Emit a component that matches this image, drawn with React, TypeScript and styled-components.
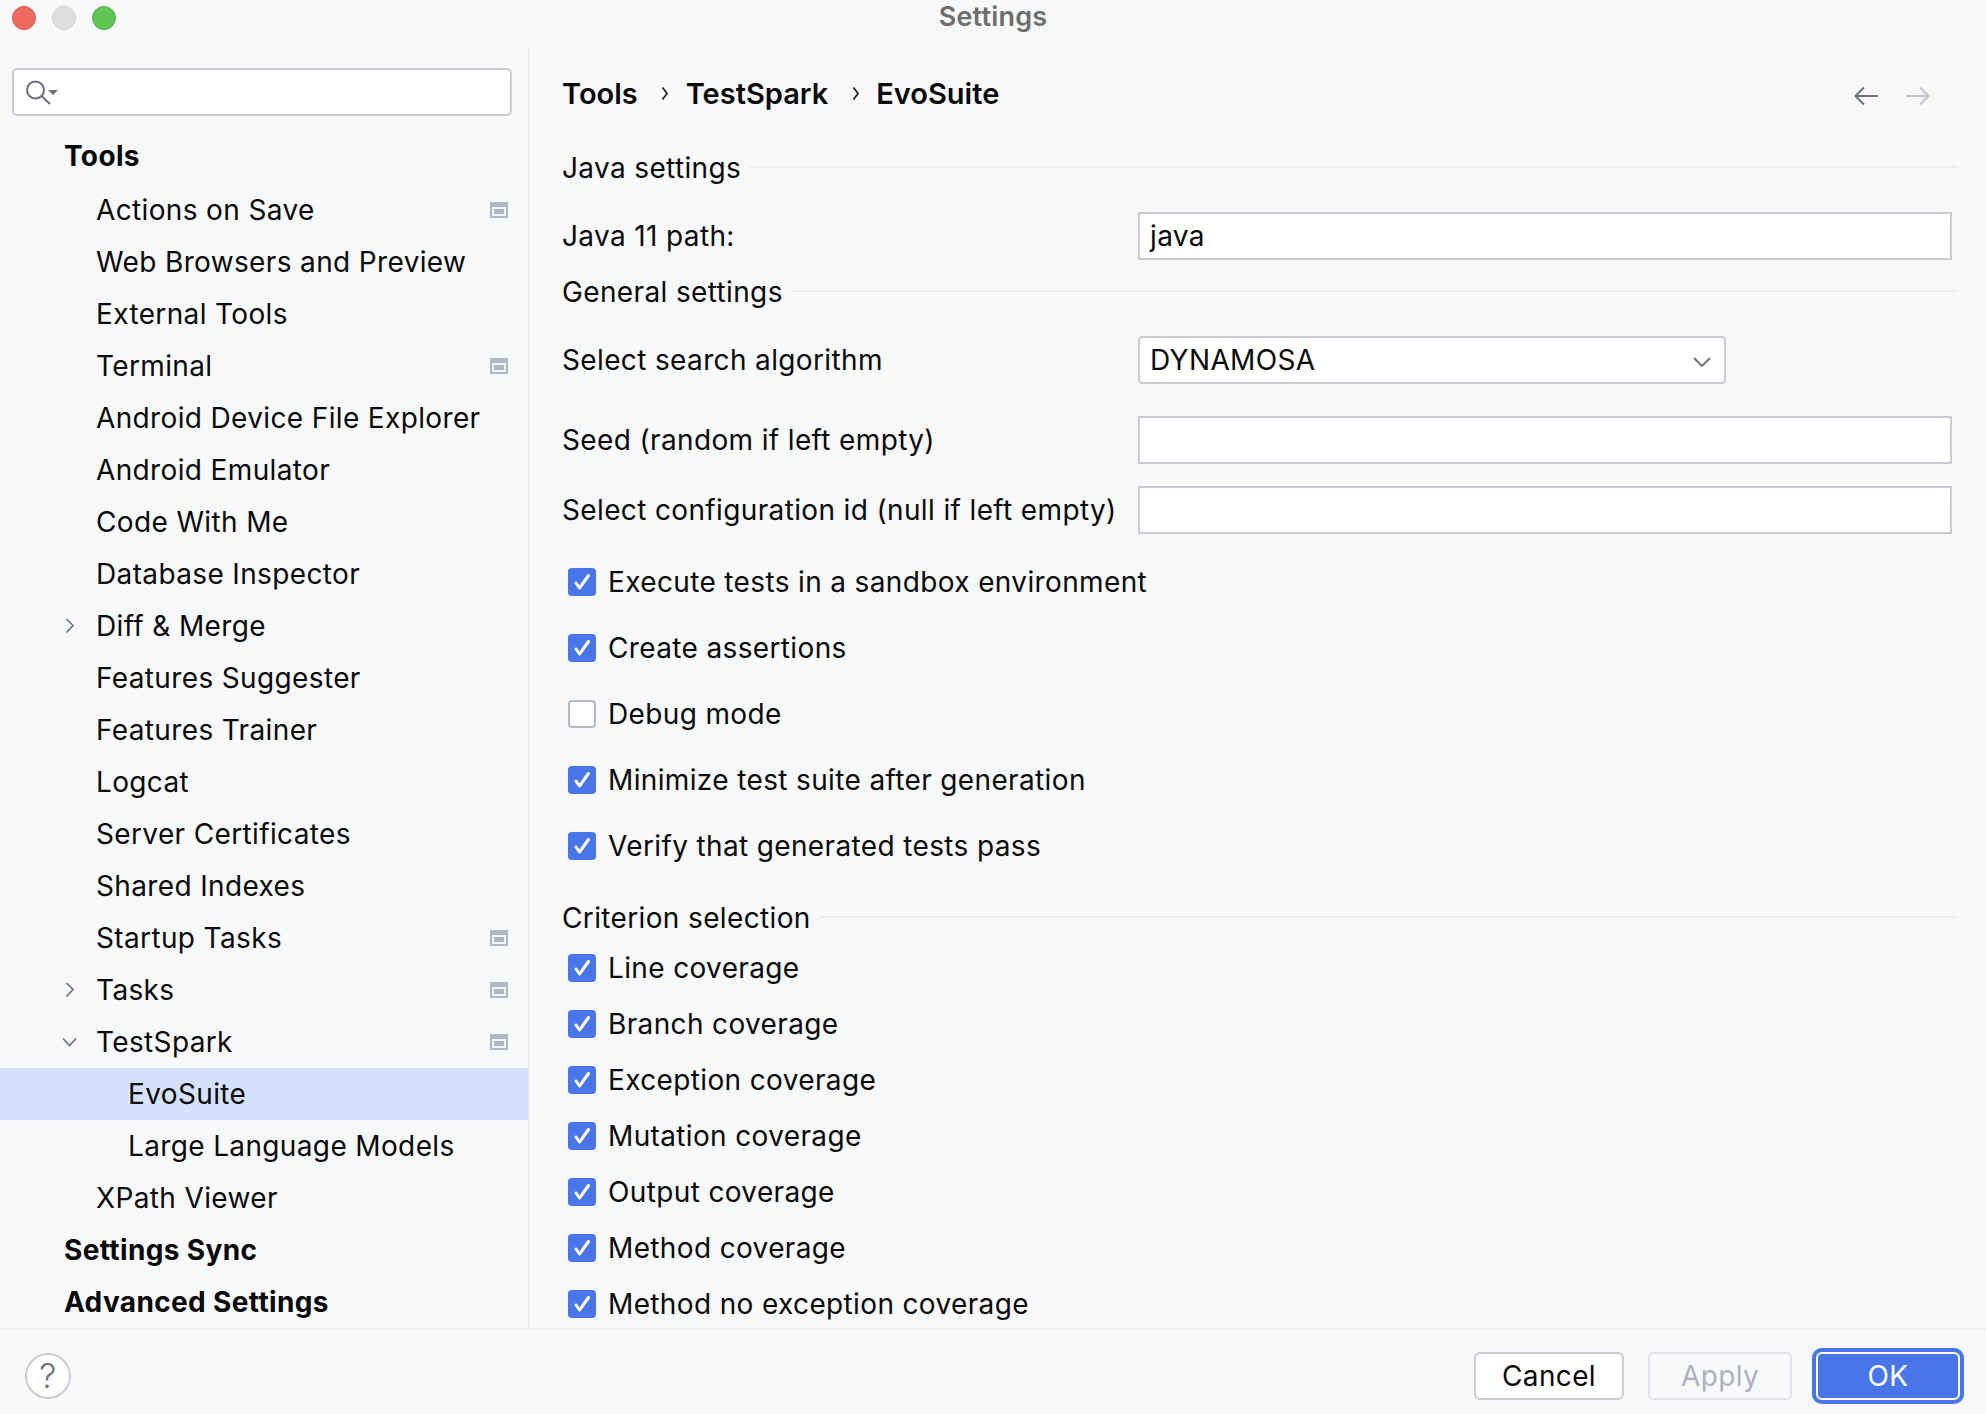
import React from "react";
import styled, { createGlobalStyle } from "styled-components";

const GlobalStyle = createGlobalStyle`
  html, body {
    margin: 0;
    padding: 0;
    background: #f7f8fa;
  }
  body {
    font-family: Inter, "Liberation Sans", sans-serif;
    font-size: 28px;
    font-optical-sizing: none;
    letter-spacing: 0.36px;
    color: #0a0a0a;
    overflow: hidden;
  }
`;

const treeItems = [
  { label: "Tools", level: 0, bold: true },
  { label: "Actions on Save", level: 1, badge: true },
  { label: "Web Browsers and Preview", level: 1 },
  { label: "External Tools", level: 1 },
  { label: "Terminal", level: 1, badge: true },
  { label: "Android Device File Explorer", level: 1 },
  { label: "Android Emulator", level: 1 },
  { label: "Code With Me", level: 1 },
  { label: "Database Inspector", level: 1 },
  { label: "Diff & Merge", level: 1, arrow: "right" },
  { label: "Features Suggester", level: 1 },
  { label: "Features Trainer", level: 1 },
  { label: "Logcat", level: 1 },
  { label: "Server Certificates", level: 1 },
  { label: "Shared Indexes", level: 1 },
  { label: "Startup Tasks", level: 1, badge: true },
  { label: "Tasks", level: 1, arrow: "right", badge: true },
  { label: "TestSpark", level: 1, arrow: "down", badge: true },
  { label: "EvoSuite", level: 2, selected: true },
  { label: "Large Language Models", level: 2 },
  { label: "XPath Viewer", level: 1 },
  { label: "Settings Sync", level: 0, bold: true },
  { label: "Advanced Settings", level: 0, bold: true },
];

const generalChecks = [
  { label: "Execute tests in a sandbox environment", checked: true },
  { label: "Create assertions", checked: true },
  { label: "Debug mode", checked: false },
  { label: "Minimize test suite after generation", checked: true },
  { label: "Verify that generated tests pass", checked: true },
];

const criteria = [
  "Line coverage",
  "Branch coverage",
  "Exception coverage",
  "Mutation coverage",
  "Output coverage",
  "Method coverage",
  "Method no exception coverage",
];

const CheckBox = ({ checked }: { checked: boolean }) => (
  <Box $checked={checked}>
    {checked && (
      <svg width="28" height="28" viewBox="0 0 28 28" fill="none">
        <path d="M8 15l3.5 5L20.5 7.5" stroke="#fff" strokeWidth="3" strokeLinecap="round" strokeLinejoin="round" />
      </svg>
    )}
  </Box>
);

const Chevron = ({ dir }: { dir: string }) => (
  <ArrowSlot>
    <svg width="20" height="20" viewBox="0 0 20 20" fill="none">
      <path
        d={dir === "down" ? "M3 6.5l6.5 7 6.5-7" : "M6.5 3l6.5 6.5-6.5 7"}
        stroke="#6c707e"
        strokeWidth="1.7"
      />
    </svg>
  </ArrowSlot>
);

const ProjectBadge = () => (
  <BadgeSlot>
    <svg width="18" height="16" viewBox="0 0 18 16">
      <rect width="18" height="16" fill="#aeb7c2" />
      <rect x="2" y="5" width="14" height="9" fill="#f2f4f7" />
      <rect x="4" y="7" width="10" height="5" fill="#aeb7c2" />
    </svg>
  </BadgeSlot>
);

const CrumbArrow = () => (
  <CrumbSep>
    <svg width="8" height="15" viewBox="0 0 8 15" fill="none">
      <path d="M1.5 1.5L6 7.5l-4.500 6" stroke="#1a1a1a" strokeWidth="1.7" />
    </svg>
  </CrumbSep>
);

export default function App() {
  return (
    <>
      <GlobalStyle />
      <Window>
        <TitleBar>
          <Lights>
            <Light $color="#ee6a5f" $edge="#d9574d" />
            <Light $color="#e0e0e0" $edge="#c9c9c9" />
            <Light $color="#61c554" $edge="#50ae44" />
          </Lights>
          <Title>Settings</Title>
        </TitleBar>

        <Body>
          <Sidebar>
            <SearchBox>
              <svg width="34" height="28" viewBox="0 0 34 28" fill="none">
                <circle cx="10.5" cy="12" r="8.5" stroke="#6c707e" strokeWidth="2" />
                <path d="M16.5 18l8.5 8" stroke="#6c707e" strokeWidth="2" />
                <path d="M23 12h10l-5 5z" fill="#6c707e" />
              </svg>
            </SearchBox>
            <Tree>
              {treeItems.map((item) => (
                <TreeRow key={item.label} $level={item.level} $bold={item.bold} $selected={item.selected}>
                  {item.arrow && <Chevron dir={item.arrow} />}
                  {item.label}
                  {item.badge && <ProjectBadge />}
                </TreeRow>
              ))}
            </Tree>
          </Sidebar>

          <Content>
            <Header>
              <Crumb>Tools</Crumb>
              <CrumbArrow />
              <Crumb>TestSpark</Crumb>
              <CrumbArrow />
              <Crumb>EvoSuite</Crumb>
              <NavArrows>
                <svg width="24" height="20" viewBox="0 0 24 20" fill="none">
                  <path d="M24 10H2M10 1.5L1.5 10l8.5 8.5" stroke="#6c707e" strokeWidth="2" />
                </svg>
                <svg width="24" height="20" viewBox="0 0 24 20" fill="none">
                  <path d="M0 10h22M14 1.5l8.5 8.5-8.5 8.5" stroke="#c0c2c8" strokeWidth="2" />
                </svg>
              </NavArrows>
            </Header>

            <Section $height={56}>Java settings</Section>
            <FormRow $top={16}>
              <FieldLabel>Java 11 path:</FieldLabel>
              <TextField>java</TextField>
            </FormRow>

            <Section $height={40} $top={12}>General settings</Section>
            <FormRow $top={24}>
              <FieldLabel>Select search algorithm</FieldLabel>
              <Combo>
                DYNAMOSA
                <svg width="20" height="14" viewBox="0 0 20 14" fill="none">
                  <path d="M2 5l8 8 8-8" stroke="#6c707e" strokeWidth="1.8" />
                </svg>
              </Combo>
            </FormRow>
            <FormRow $top={32}>
              <FieldLabel>Seed (random if left empty)</FieldLabel>
              <TextField />
            </FormRow>
            <FormRow $top={22}>
              <FieldLabel>Select configuration id (null if left empty)</FieldLabel>
              <TextField />
            </FormRow>

            <CheckList $top={15}>
              {generalChecks.map((c) => (
                <CheckRow key={c.label} $height={66}>
                  <CheckBox checked={c.checked} />
                  {c.label}
                </CheckRow>
              ))}
            </CheckList>

            <Section $height={40} $top={19}>Criterion selection</Section>
            <CheckList $top={2}>
              {criteria.map((label) => (
                <CheckRow key={label} $height={56}>
                  <CheckBox checked />
                  {label}
                </CheckRow>
              ))}
            </CheckList>
          </Content>
        </Body>

        <Footer>
          <HelpButton>?</HelpButton>
          <Actions>
            <DialogButton>Cancel</DialogButton>
            <DialogButton $disabled>Apply</DialogButton>
            <OkButton>OK</OkButton>
          </Actions>
        </Footer>
      </Window>
    </>
  );
}

const Window = styled.div`
  width: 1986px;
  height: 1414px;
  display: flex;
  flex-direction: column;
  background: #f7f8fa;
  overflow: hidden;
`;

const TitleBar = styled.div`
  height: 48px;
  flex: none;
  position: relative;
  display: flex;
  justify-content: center;
`;

const Lights = styled.div`
  position: absolute;
  left: 12px;
  top: 6px;
  display: flex;
  gap: 16px;
`;

const Light = styled.span<{ $color: string; $edge: string }>`
  width: 24px;
  height: 24px;
  box-sizing: border-box;
  border-radius: 50%;
  background: ${(p) => p.$color};
  border: 1px solid ${(p) => p.$edge};
`;

const Title = styled.div`
  font-weight: 600;
  font-size: 27px;
  letter-spacing: 0.2px;
  color: #6e6e6e;
  line-height: 34px;
`;

const Body = styled.div`
  flex: none;
  height: 1280px;
  display: flex;
  overflow: hidden;
`;

const Sidebar = styled.aside`
  width: 530px;
  box-sizing: border-box;
  flex: none;
  border-right: 2px solid #ebecf0;
  padding-top: 20px;
`;

const SearchBox = styled.div`
  margin-left: 12px;
  width: 500px;
  height: 48px;
  box-sizing: border-box;
  background: #fff;
  border: 2px solid #c9ccd6;
  border-radius: 5px;
  display: flex;
  align-items: center;
  padding-left: 11px;
`;

const Tree = styled.div`
  margin-top: 14px;
`;

const TreeRow = styled.div<{ $level: number; $bold?: boolean; $selected?: boolean }>`
  height: 52px;
  box-sizing: border-box;
  position: relative;
  display: flex;
  align-items: center;
  padding-left: ${(p) => 64 + p.$level * 32}px;
  font-weight: ${(p) => (p.$bold ? 700 : 400)};
  background: ${(p) => (p.$selected ? "#d5e1fb" : "transparent")};
  &:first-child {
    height: 54px;
    padding-bottom: 2px;
  }
`;

const ArrowSlot = styled.span`
  position: absolute;
  left: 60px;
  top: 16px;
  height: 20px;
  svg {
    display: block;
  }
`;

const BadgeSlot = styled.span`
  position: absolute;
  left: 490px;
  top: 18px;
  height: 16px;
  svg {
    display: block;
  }
`;

const Content = styled.main`
  flex: 1;
  min-width: 0;
  padding-left: 32px;
  padding-right: 28px;
`;

const Header = styled.div`
  height: 92px;
  box-sizing: border-box;
  padding-bottom: 2px;
  display: flex;
  align-items: center;
`;

const Crumb = styled.span`
  font-weight: 600;
  font-size: 29px;
  letter-spacing: 0;
`;

const CrumbSep = styled.span`
  width: 48px;
  box-sizing: border-box;
  padding-left: 7px;
  display: flex;
  align-items: center;
  justify-content: center;
`;

const NavArrows = styled.div`
  margin-left: auto;
  margin-right: 28px;
  margin-top: 6px;
  display: flex;
  gap: 28px;
`;

const Section = styled.div<{ $height: number; $top?: number }>`
  height: ${(p) => p.$height}px;
  margin-top: ${(p) => p.$top ?? 0}px;
  display: flex;
  align-items: center;
  gap: 8px;
  &::after {
    content: "";
    flex: 1;
    height: 2px;
    background: #ebecf0;
    margin-top: -2px;
  }
`;

const FormRow = styled.div<{ $top: number }>`
  margin-top: ${(p) => p.$top}px;
  display: grid;
  grid-template-columns: 576px 1fr;
  align-items: center;
  margin-right: 6px;
`;

const FieldLabel = styled.label``;

const TextField = styled.div`
  height: 48px;
  box-sizing: border-box;
  background: #fff;
  border: 2px solid #c9ccd6;
  padding-left: 10px;
  display: flex;
  align-items: center;
`;

const Combo = styled(TextField)`
  width: 588px;
  border-radius: 4px;
  justify-content: space-between;
  padding-right: 12px;
`;

const CheckList = styled.div<{ $top: number }>`
  margin-top: ${(p) => p.$top}px;
`;

const CheckRow = styled.div<{ $height: number }>`
  height: ${(p) => p.$height}px;
  display: flex;
  align-items: center;
  gap: 12px;
  padding-left: 6px;
`;

const Box = styled.span<{ $checked: boolean }>`
  width: 28px;
  height: 28px;
  flex: none;
  box-sizing: border-box;
  border-radius: 4px;
  background: ${(p) => (p.$checked ? "#4876e8" : "#fff")};
  border: ${(p) => (p.$checked ? "none" : "2px solid #b4b8c6")};
  display: flex;
`;

const Footer = styled.footer`
  flex: none;
  height: 86px;
  box-sizing: border-box;
  border-top: 2px solid #ebecf0;
  display: flex;
  align-items: center;
  justify-content: space-between;
  padding: 7px 22px 0 25px;
`;

const HelpButton = styled.div`
  width: 46px;
  height: 46px;
  box-sizing: border-box;
  border-radius: 50%;
  background: #fff;
  border: 2px solid #c9ccd6;
  color: #6c707e;
  font-size: 34px;
  font-weight: 300;
  display: flex;
  align-items: center;
  justify-content: center;
`;

const Actions = styled.div`
  display: flex;
  align-items: center;
  gap: 24px;
`;

const DialogButton = styled.button<{ $disabled?: boolean }>`
  width: ${(p) => (p.$disabled ? 144 : 150)}px;
  height: 48px;
  box-sizing: border-box;
  border-radius: 6px;
  font: inherit;
  letter-spacing: inherit;
  padding: 0;
  color: ${(p) => (p.$disabled ? "#aeb1bd" : "#0a0a0a")};
  background: ${(p) => (p.$disabled ? "transparent" : "#fff")};
  border: 2px solid ${(p) => (p.$disabled ? "#e0e1e6" : "#c9ccd6")};
`;

const OkButton = styled.button`
  width: 152px;
  height: 56px;
  margin-left: -4px;
  box-sizing: border-box;
  border: none;
  border-radius: 10px;
  padding: 0;
  font: inherit;
  letter-spacing: inherit;
  color: #fff;
  background: #4876e8;
  box-shadow: inset 0 0 0 4px #4876e8, inset 0 0 0 6px #fff;
`;
